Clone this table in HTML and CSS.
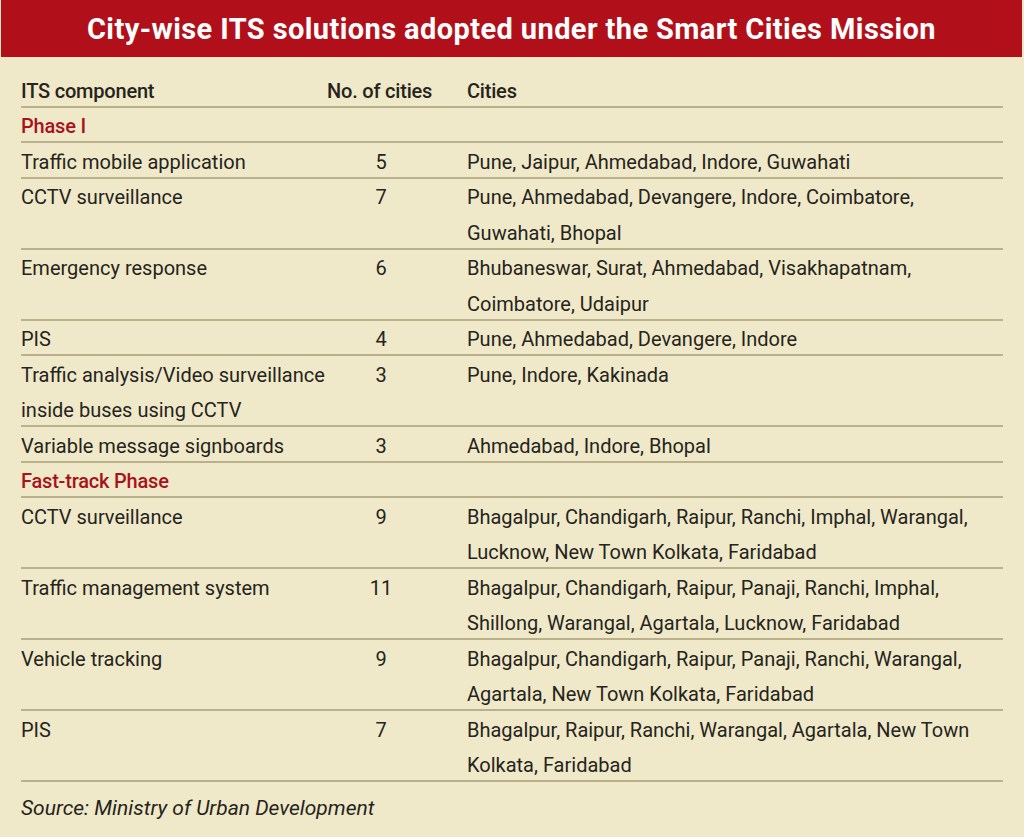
FILE: index.html
```html
<!DOCTYPE html>
<html lang="en">
<head>
<meta charset="utf-8">
<title>City-wise ITS solutions adopted under the Smart Cities Mission</title>
<link rel="stylesheet" href="styles.css">
</head>
<body>
<div class="page">
  <h1 class="title">City-wise ITS solutions adopted under the Smart Cities Mission</h1>
  <div class="table">
    <div class="row head">
      <div class="c1">ITS component</div>
      <div class="c2h">No. of cities</div>
      <div class="c3">Cities</div>
    </div>
    <div class="row phase"><div class="c1">Phase I</div></div>
    <div class="row">
      <div class="c1">Traffic mobile application</div>
      <div class="c2">5</div>
      <div class="c3">Pune, Jaipur, Ahmedabad, Indore, Guwahati</div>
    </div>
    <div class="row">
      <div class="c1">CCTV surveillance</div>
      <div class="c2">7</div>
      <div class="c3">Pune, Ahmedabad, Devangere, Indore, Coimbatore,<br>Guwahati, Bhopal</div>
    </div>
    <div class="row">
      <div class="c1">Emergency response</div>
      <div class="c2">6</div>
      <div class="c3">Bhubaneswar, Surat, Ahmedabad, Visakhapatnam,<br>Coimbatore, Udaipur</div>
    </div>
    <div class="row">
      <div class="c1">PIS</div>
      <div class="c2">4</div>
      <div class="c3">Pune, Ahmedabad, Devangere, Indore</div>
    </div>
    <div class="row">
      <div class="c1">Traffic analysis/Video surveillance<br>inside buses using CCTV</div>
      <div class="c2">3</div>
      <div class="c3">Pune, Indore, Kakinada</div>
    </div>
    <div class="row">
      <div class="c1">Variable message signboards</div>
      <div class="c2">3</div>
      <div class="c3">Ahmedabad, Indore, Bhopal</div>
    </div>
    <div class="row phase"><div class="c1">Fast-track Phase</div></div>
    <div class="row">
      <div class="c1">CCTV surveillance</div>
      <div class="c2">9</div>
      <div class="c3">Bhagalpur, Chandigarh, Raipur, Ranchi, Imphal, Warangal,<br>Lucknow, New Town Kolkata, Faridabad</div>
    </div>
    <div class="row">
      <div class="c1">Traffic management system</div>
      <div class="c2">11</div>
      <div class="c3">Bhagalpur, Chandigarh, Raipur, Panaji, Ranchi, Imphal,<br>Shillong, Warangal, Agartala, Lucknow, Faridabad</div>
    </div>
    <div class="row">
      <div class="c1">Vehicle tracking</div>
      <div class="c2">9</div>
      <div class="c3">Bhagalpur, Chandigarh, Raipur, Panaji, Ranchi, Warangal,<br>Agartala, New Town Kolkata, Faridabad</div>
    </div>
    <div class="row">
      <div class="c1">PIS</div>
      <div class="c2">7</div>
      <div class="c3">Bhagalpur, Raipur, Ranchi, Warangal, Agartala, New Town<br>Kolkata, Faridabad</div>
    </div>
  </div>
  <p class="source">Source: Ministry of Urban Development</p>
</div>
</body>
</html>
```

FILE: styles.css
```css
html, body {
  margin: 0;
  padding: 0;
  background: #f2edd6;
}

.page {
  width: 1024px;
  height: 837px;
  background: #efe9c9;
  font-family: Roboto, "Liberation Sans", Arial, sans-serif;
  color: #26241c;
  overflow: hidden;
}

.title {
  margin: 0 2px 0 1px;
  height: 57px;
  padding-top: 1px;
  box-sizing: border-box;
  background: #b1101a;
  color: #ffffff;
  font-size: 29px;
  font-weight: 700;
  line-height: 56px;
  text-align: center;
  letter-spacing: 0.4px;
}

.table {
  margin: 15px 21px 0 21px;
}

.row {
  display: grid;
  grid-template-columns: 306px 140px 1fr;
  border-bottom: 2px solid #b8b18b;
  padding-top: 1.5px;
  font-size: 20px;
  line-height: 35.5px;
  white-space: nowrap;
}

.row > div {
  margin-bottom: -3.5px;
}

.head {
  font-weight: 500;
  letter-spacing: -0.2px;
}

.phase {
  color: #a8121b;
  font-weight: 500;
  letter-spacing: -0.2px;
}

.c2 {
  text-align: center;
  padding-right: 32px;
}

.source {
  margin: 0 21px;
  padding-top: 9px;
  font-size: 21px;
  line-height: 35.5px;
  font-style: italic;
}
```
